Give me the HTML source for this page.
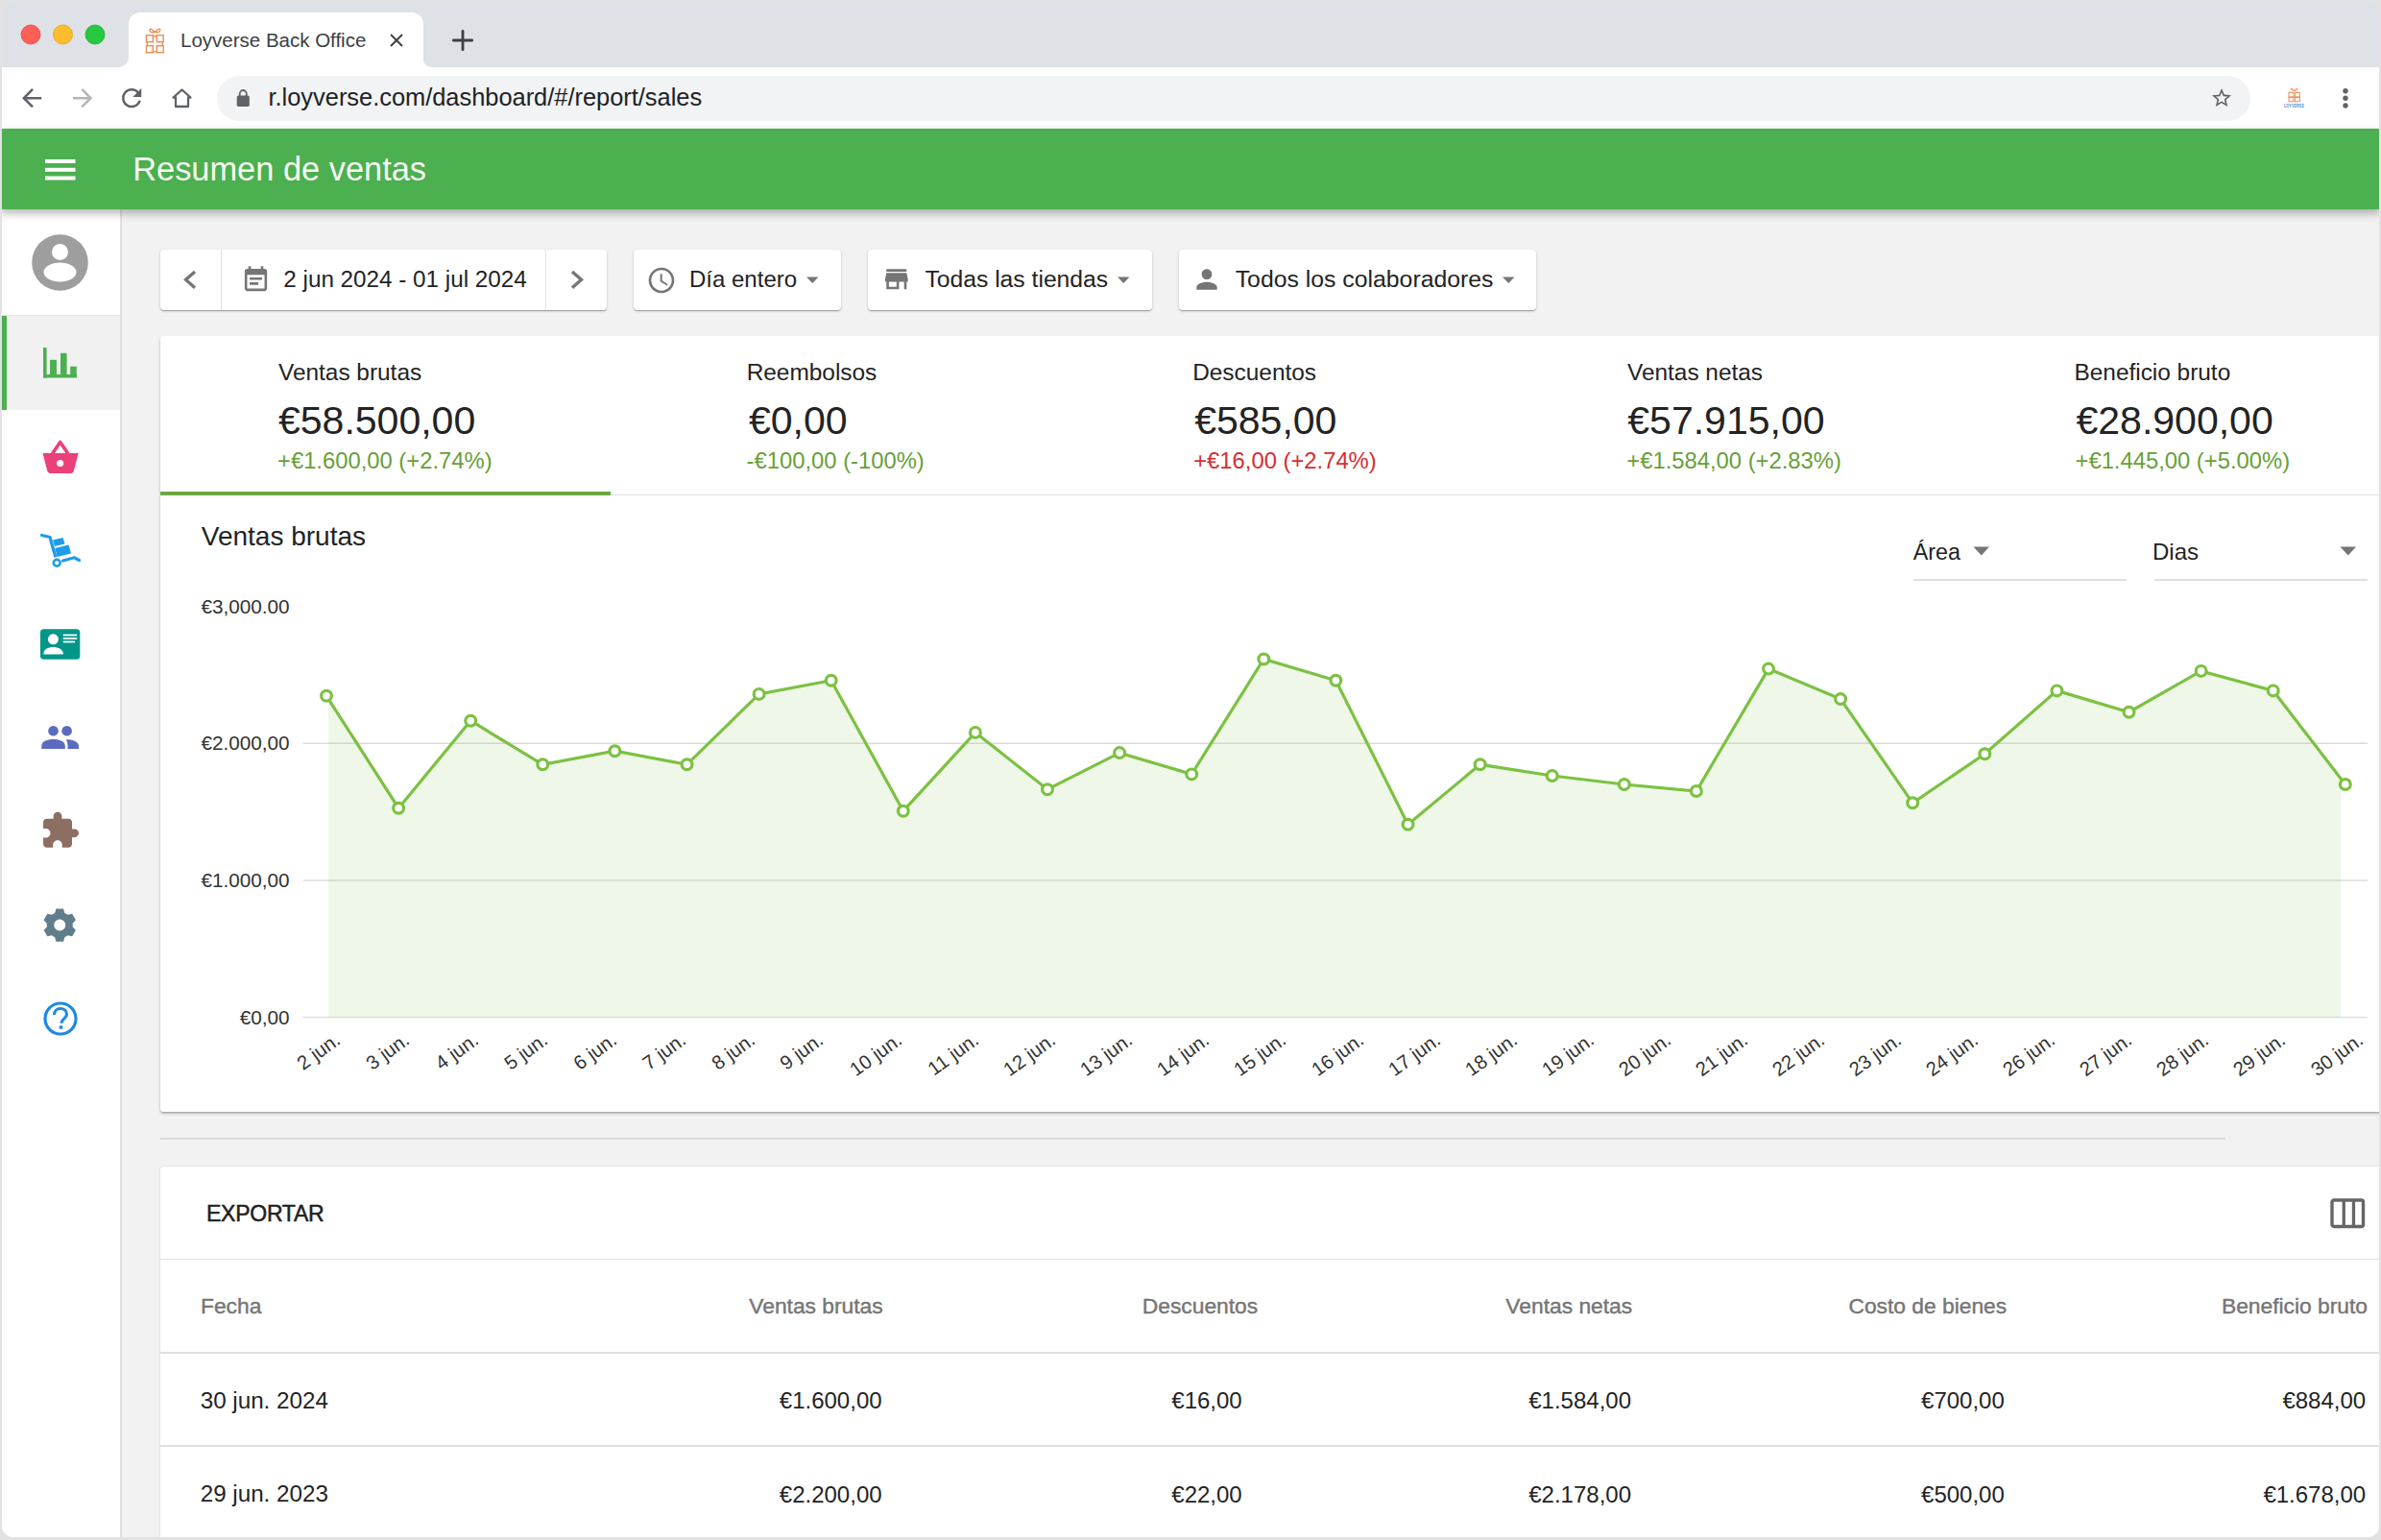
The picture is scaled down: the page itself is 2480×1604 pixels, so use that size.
<!DOCTYPE html>
<html><head><meta charset="utf-8">
<style>
html,body{margin:0;padding:0}
body{width:2480px;height:1604px;overflow:hidden;position:relative;background:#e2e2e2;font-family:"Liberation Sans",sans-serif}
.a{position:absolute}
.t{position:absolute;white-space:pre;line-height:1;font-family:"Liberation Sans",sans-serif;color:#232323}
#win{position:absolute;left:2px;top:1px;width:2476px;height:1600px;border-radius:12px;overflow:hidden;background:#f2f2f2}
svg{position:absolute;overflow:visible}
.kg{color:#689f38}.kr{color:#d32f2f}
.yl{font-size:20.7px;width:120px;text-align:right;color:#333}
.xl{font-size:20.3px;width:120px;text-align:right;color:#333;transform-origin:100% 85%;transform:rotate(-36deg)}
</style></head>
<body>
<div id="win">
<!-- everything inside uses page coords offset by (-2,-1) -->
<div class="a" style="left:-2px;top:-1px;width:2480px;height:1604px">

<!-- TAB STRIP -->
<div class="a" style="left:0;top:0;width:2480px;height:70px;background:#dee1e6"></div>
<!-- traffic lights -->
<svg style="left:0;top:0" width="130" height="70">
  <circle cx="32" cy="36" r="10" fill="#ff5f57" stroke="#e2463f" stroke-width="0.8"/>
  <circle cx="65.5" cy="36" r="10" fill="#febc2e" stroke="#e1a116" stroke-width="0.8"/>
  <circle cx="99" cy="36" r="10" fill="#28c840" stroke="#1aab29" stroke-width="0.8"/>
</svg>
<!-- active tab -->
<div class="a" style="left:134px;top:13px;width:306.5px;height:58px;background:#fff;border-radius:12px 12px 0 0"></div>
<svg style="left:120px;top:56px" width="340" height="15">
  <path d="M2 14 Q14 14 14 2 L14 14 Z" fill="#fff"/>
  <path d="M320.5 3 Q320.5 14 331 14 L320.5 14 Z" fill="#fff"/>
</svg>
<!-- favicon -->
<svg style="left:150px;top:27px" width="22" height="30" viewBox="0 0 22 30">
  <g fill="none" stroke="#ee8a4f" stroke-width="1.35">
    <rect x="2.4" y="9.7" width="6.9" height="7"/><rect x="13.3" y="9.7" width="6.9" height="7"/>
    <rect x="2.4" y="20.7" width="6.9" height="7"/><rect x="13.3" y="20.7" width="6.9" height="7"/>
    <path d="M9.3 10.6H13.3M9.3 26.8H13.3M3.4 16.7V20.7M19.2 16.7V20.7"/>
    <path d="M11.3 6.4C9.5 4.5 8 2.7 6.6 3.1C5.2 3.6 5.6 5.9 7.3 6.3C8.7 6.6 10 6.5 11.3 6.4C12.6 6.5 13.9 6.6 15.3 6.3C17 5.9 17.4 3.6 16 3.1C14.6 2.7 13.1 4.5 11.3 6.4z"/>
  </g>
</svg>
<div class="t" style="left:188px;top:32px;font-size:20.5px;color:#3c4043">Loyverse Back Office</div>
<svg style="left:406px;top:35px" width="14" height="14" viewBox="0 0 14 14"><path d="M1 1L13 13M13 1L1 13" stroke="#3c4043" stroke-width="1.9"/></svg>
<svg style="left:469.5px;top:30px" width="25" height="24" viewBox="0 0 25 24"><path d="M12 2.3V21.7M2.3 12H21.7" stroke="#3c4043" stroke-width="2.8" stroke-linecap="round"/></svg>

<!-- TOOLBAR -->
<div class="a" style="left:0;top:70px;width:2480px;height:64px;background:#fff"></div>
<svg style="left:18.4px;top:87.3px" width="30.3" height="30.3" viewBox="0 0 24 24"><path d="M20 11H7.83l5.59-5.59L12 4l-8 8 8 8 1.41-1.41L7.83 13H20v-2z" fill="#5f6368"/></svg>
<svg style="left:70.6px;top:87.3px" width="30.3" height="30.3" viewBox="0 0 24 24"><path d="M12 4l-1.41 1.41L16.17 11H4v2h12.17l-5.58 5.59L12 20l8-8z" fill="#b4b6b8"/></svg>
<svg style="left:122.4px;top:87px" width="30.3" height="30.3" viewBox="0 0 24 24"><path d="M17.65 6.35C16.2 4.9 14.21 4 12 4c-4.42 0-7.99 3.58-7.99 8s3.57 8 7.99 8c3.73 0 6.84-2.55 7.73-6h-2.08c-.82 2.33-3.04 4-5.65 4-3.31 0-6-2.69-6-6s2.69-6 6-6c1.66 0 3.14.69 4.22 1.78L13 11h7V4l-2.35 2.35z" fill="#5f6368"/></svg>
<svg style="left:178px;top:91px" width="23" height="22" viewBox="0 0 23 22"><path d="M11.5 2.5L2.5 10.5H5v9.5h13V10.5h2.5z" fill="none" stroke="#5f6368" stroke-width="2.3" stroke-linejoin="round"/></svg>
<!-- omnibox -->
<div class="a" style="left:225.5px;top:79px;width:2118px;height:47px;background:#f1f3f4;border-radius:24px"></div>
<svg style="left:246px;top:92px" width="15" height="20" viewBox="0 0 15 20"><path d="M3.75 8V5.5A3.5 3.5 0 0 1 10.75 5.5V8" fill="none" stroke="#5f6368" stroke-width="1.8"/><rect x="0.7" y="7.5" width="13.1" height="11.4" rx="1.6" fill="#5f6368"/></svg>
<div class="t" style="left:279.5px;top:89.3px;font-size:25.4px;color:#202124">r.loyverse.com/dashboard/#/report/sales</div>
<svg style="left:2302px;top:90px" width="24" height="24" viewBox="0 0 24 24"><path d="M22 9.24l-7.19-.62L12 2 9.19 8.63 2 9.24l5.46 4.73L5.82 21 12 17.27 18.18 21l-1.63-7.03L22 9.24zM12 15.4l-3.76 2.27 1-4.28-3.32-2.88 4.38-.38L12 6.1l1.71 4.04 4.38.38-3.32 2.88 1 4.28L12 15.4z" fill="#5f6368"/></svg>
<!-- extension icon -->
<svg style="left:2378px;top:90px" width="23" height="25" viewBox="0 0 23 25">
  <g fill="none" stroke="#ee8a4f" stroke-width="1">
    <rect x="6" y="6.3" width="5" height="4.6"/><rect x="12.3" y="6.3" width="5" height="4.6"/>
    <rect x="6" y="11.5" width="5" height="4.3"/><rect x="12.3" y="11.5" width="5" height="4.3"/>
    <path d="M11.6 4.5C10.5 3 9 1.5 8.3 2.3C7.6 3.2 9.5 4.3 11.6 4.5C13.7 4.3 15.6 3.2 14.9 2.3C14.2 1.5 12.7 3 11.6 4.5z"/>
  </g>
  <text x="11.5" y="22.3" font-family="Liberation Sans" font-size="5.6" font-weight="bold" fill="#3f95d6" text-anchor="middle" textLength="21" lengthAdjust="spacingAndGlyphs">LOYVERSE</text>
</svg>
<svg style="left:2438px;top:91px" width="10" height="23"><circle cx="5" cy="3.7" r="2.7" fill="#5f6368"/><circle cx="5" cy="11.3" r="2.7" fill="#5f6368"/><circle cx="5" cy="19" r="2.7" fill="#5f6368"/></svg>

<!-- GREEN APP BAR -->
<div class="a" style="left:0;top:133.6px;width:2480px;height:84.4px;background:#4caf50;box-shadow:0 4px 9px rgba(0,0,0,0.3);z-index:5"></div>
<svg style="left:47px;top:165.5px;z-index:6" width="31.5" height="22" viewBox="0 0 31.5 22"><rect x="0" y="0" width="31.5" height="4" fill="#fff"/><rect x="0" y="8.8" width="31.5" height="4" fill="#fff"/><rect x="0" y="17.5" width="31.5" height="4" fill="#fff"/></svg>
<div class="t" style="left:138.2px;top:158.8px;font-size:34.4px;color:#f4faf2;z-index:6">Resumen de ventas</div>

<!-- SIDEBAR -->
<div class="a" style="left:0;top:218px;width:125px;height:1386px;background:#fff;border-right:2px solid #e0e0e0"></div>
<div class="a" style="left:0;top:327.5px;width:125px;height:1px;background:#e6e6e6"></div>
<div class="a" style="left:0;top:328.5px;width:125px;height:98px;background:#f1f1f1"></div>
<div class="a" style="left:2px;top:328.5px;width:5px;height:98px;background:#4caf50"></div>
<!-- avatar -->
<svg style="left:33px;top:244px" width="59" height="59" viewBox="0 0 59 59">
  <defs><clipPath id="avc"><circle cx="29.5" cy="29.5" r="29.3"/></clipPath></defs>
  <circle cx="29.5" cy="29.5" r="29.3" fill="#9e9e9e"/>
  <g clip-path="url(#avc)" fill="#fff">
    <circle cx="29.5" cy="18.5" r="8.5"/>
    <ellipse cx="29.5" cy="39.5" rx="17" ry="10"/>
  </g>
</svg>
<!-- bar chart icon -->
<svg style="left:45px;top:362px" width="35" height="32" viewBox="0 0 35 32" fill="#4caf50">
  <rect x="0" y="0" width="3.6" height="31.5"/><rect x="0" y="28" width="35" height="3.5"/>
  <rect x="7" y="12.8" width="7" height="18"/><rect x="18" y="5.8" width="6.6" height="25"/><rect x="28.2" y="19.7" width="6.6" height="11"/>
</svg>
<!-- basket icon -->
<svg style="left:43px;top:459px" width="40" height="35" viewBox="0 0 40 35">
  <path d="M11.5 13.5L19.7 1.5L27.9 13.5" fill="none" stroke="#ec407a" stroke-width="3.6" stroke-linejoin="round"/>
  <path d="M1.5 13h37.2l-4.8 18.5c-.4 1.5-1.6 2.5-3.2 2.5H9.5c-1.6 0-2.8-1-3.2-2.5z" fill="#ec407a"/>
  <circle cx="19.7" cy="23.5" r="3.6" fill="#fff"/>
</svg>
<!-- dolly icon -->
<svg style="left:42px;top:554px" width="42" height="38" viewBox="0 0 42 38" fill="#1e9be9">
  <path d="M1.5 3.5L10 5.5L15.5 25" fill="none" stroke="#1e9be9" stroke-width="3.2" stroke-linecap="round" stroke-linejoin="round"/>
  <circle cx="17.2" cy="32.3" r="3.4" fill="none" stroke="#1e9be9" stroke-width="2.6"/>
  <path d="M23.5 30L35.5 26.8L40.5 29.5" fill="none" stroke="#1e9be9" stroke-width="3.2" stroke-linecap="round" stroke-linejoin="round"/>
  <path d="M13 8.5L23.5 6L25.5 12.5L15 15z"/>
  <path d="M15.2 17L29.5 13.5L32 22.5L17.5 26z"/>
</svg>
<!-- id card icon -->
<svg style="left:42px;top:654.5px" width="42" height="32" viewBox="0 0 42 32">
  <rect x="0" y="0.3" width="41.3" height="31.5" rx="3.5" fill="#009688"/>
  <circle cx="13.4" cy="10.8" r="5.5" fill="#fff"/>
  <path d="M3.3 26.5C3.3 21 8 19 13.4 19S23.9 21 23.9 26.5z" fill="#fff"/>
  <rect x="23.8" y="5.6" width="14.4" height="1.8" fill="#fff"/><rect x="23.8" y="9.1" width="14.4" height="1.8" fill="#fff"/><rect x="23.8" y="12.6" width="12.2" height="1.8" fill="#fff"/>
</svg>
<!-- people icon -->
<svg style="left:43px;top:755px" width="40" height="26" viewBox="0 0 40 26" fill="#5c6bc0">
  <circle cx="12.5" cy="6.3" r="5.3"/><circle cx="26.6" cy="6.3" r="5.3"/>
  <path d="M0.3 25V22C0.3 17 6 15 12.5 15S24.8 17 24.8 22V25z"/>
  <path d="M25.8 15.2C32 15.2 39 17 39 22V25H27.5V22C27.5 19 27 17 25.8 15.2z"/>
</svg>
<!-- puzzle icon -->
<svg style="left:40.5px;top:844.4px" width="42.3" height="42.3" viewBox="0 0 24 24"><path d="M20.5 11H19V7c0-1.1-.9-2-2-2h-4V3.5C13 2.12 11.88 1 10.5 1S8 2.12 8 3.5V5H4c-1.1 0-1.99.9-1.99 2v3.8H3.5c1.49 0 2.7 1.21 2.7 2.7s-1.21 2.7-2.7 2.7H2V20c0 1.1.9 2 2 2h3.8v-1.5c0-1.49 1.21-2.7 2.7-2.7 1.49 0 2.7 1.21 2.7 2.7V22H17c1.1 0 2-.9 2-2v-4h1.5c1.38 0 2.5-1.12 2.5-2.5S21.88 11 20.5 11z" fill="#8d6e63" transform="translate(0.3 0) scale(1.0)"/></svg>
<!-- gear icon -->
<svg style="left:44.8px;top:945.6px" width="35" height="36" viewBox="0 0 35 36">
  <path fill="#607d8b" fill-rule="evenodd" d="M22.34 4.94 L21.04 0.46 L13.46 0.46 L12.16 4.94 L8.88 6.83 L4.35 5.73 L0.56 12.29 L3.78 15.66 L3.78 19.44 L0.56 22.81 L4.35 29.37 L8.88 28.27 L12.16 30.16 L13.46 34.64 L21.04 34.64 L22.34 30.16 L25.62 28.27 L30.15 29.37 L33.94 22.81 L30.72 19.44 L30.72 15.66 L33.94 12.29 L30.15 5.73 L25.62 6.83 Z M23.25 17.55 A6 6 0 1 0 11.25 17.55 A6 6 0 1 0 23.25 17.55 Z"/>
</svg>
<!-- help icon -->
<svg style="left:44.5px;top:1042.5px" width="36" height="36" viewBox="0 0 36 36">
  <circle cx="18" cy="18" r="16" fill="none" stroke="#1e88e5" stroke-width="3.2"/>
  <path d="M11.5 14c0-3.8 2.8-6.5 6.5-6.5s6.5 2.6 6.5 6c0 4.5-5.5 4.8-5.5 9.3" fill="none" stroke="#1e88e5" stroke-width="3.2"/>
  <rect x="16.7" y="25.3" width="3.6" height="3.4" fill="#1e88e5"/>
</svg>

<!-- FILTER BAR -->
<div class="a" style="left:166.5px;top:259.5px;width:465.5px;height:63px;background:#fff;border-radius:4px;box-shadow:0 1px 3px rgba(0,0,0,0.2),0 1px 1px rgba(0,0,0,0.14),0 2px 1px -1px rgba(0,0,0,0.12)"></div>
<div class="a" style="left:230px;top:259.5px;width:1px;height:63px;background:#e3e3e3"></div>
<div class="a" style="left:568px;top:259.5px;width:1px;height:63px;background:#e3e3e3"></div>
<svg style="left:185px;top:278px" width="24" height="26" viewBox="0 0 24 26"><path d="M18 5L8.5 13.3L18 21.7" fill="none" stroke="#757575" stroke-width="3.3"/></svg>
<svg style="left:250.7px;top:275.5px" width="31" height="31" viewBox="0 0 24 24"><path d="M17 10H7v2h10v-2zm2-7h-1V1h-2v2H8V1H6v2H5c-1.11 0-1.99.9-1.99 2L3 19c0 1.1.89 2 2 2h14c1.1 0 2-.9 2-2V5c0-1.1-.9-2-2-2zm0 16H5V8h14v11zm-5-5H7v2h7v-2z" fill="#757575"/></svg>
<div class="t" style="left:295.3px;top:279.4px;font-size:24.25px">2 jun 2024 - 01 jul 2024</div>
<svg style="left:590px;top:278px" width="24" height="26" viewBox="0 0 24 26"><path d="M6 5L15.5 13.3L6 21.7" fill="none" stroke="#757575" stroke-width="3.3"/></svg>

<div class="a" style="left:660px;top:259.5px;width:216px;height:63px;background:#fff;border-radius:4px;box-shadow:0 1px 3px rgba(0,0,0,0.2),0 1px 1px rgba(0,0,0,0.14),0 2px 1px -1px rgba(0,0,0,0.12)"></div>
<svg style="left:673px;top:275.5px" width="32" height="32" viewBox="0 0 24 24"><path d="M11.99 2C6.47 2 2 6.48 2 12s4.47 10 9.99 10C17.52 22 22 17.52 22 12S17.52 2 11.99 2zM12 20c-4.42 0-8-3.58-8-8s3.58-8 8-8 8 3.58 8 8-3.58 8-8 8zm.5-13H11v6l5.25 3.15.75-1.23-4.5-2.67z" fill="#757575"/></svg>
<div class="t" style="left:718px;top:279.1px;font-size:24px">Día entero</div>
<svg style="left:840px;top:288px" width="13" height="8" viewBox="0 0 13 8"><path d="M0 0.5h12.5L6.25 7z" fill="#757575"/></svg>

<div class="a" style="left:904px;top:259.5px;width:296px;height:63px;background:#fff;border-radius:4px;box-shadow:0 1px 3px rgba(0,0,0,0.2),0 1px 1px rgba(0,0,0,0.14),0 2px 1px -1px rgba(0,0,0,0.12)"></div>
<svg style="left:917.9px;top:274.9px" width="31.6" height="31.6" viewBox="0 0 24 24"><path d="M20 4H4v2h16V4zm1 10v-2l-1-5H4l-1 5v2h1v6h10v-6h4v6h2v-6h1zm-9 4H6v-4h6v4z" fill="#757575"/></svg>
<div class="t" style="left:963.4px;top:279px;font-size:24.7px">Todas las tiendas</div>
<svg style="left:1164px;top:288px" width="13" height="8" viewBox="0 0 13 8"><path d="M0 0.5h12.5L6.25 7z" fill="#757575"/></svg>

<div class="a" style="left:1228px;top:259.5px;width:372px;height:63px;background:#fff;border-radius:4px;box-shadow:0 1px 3px rgba(0,0,0,0.2),0 1px 1px rgba(0,0,0,0.14),0 2px 1px -1px rgba(0,0,0,0.12)"></div>
<svg style="left:1241px;top:275px" width="32" height="32" viewBox="0 0 24 24"><path d="M12 12c2.21 0 4-1.79 4-4s-1.79-4-4-4-4 1.79-4 4 1.79 4 4 4zm0 2c-2.67 0-8 1.34-8 4v2h16v-2c0-2.66-5.33-4-8-4z" fill="#757575"/></svg>
<div class="t" style="left:1286.7px;top:278.9px;font-size:24.8px">Todos los colaboradores</div>
<svg style="left:1564.8px;top:288px" width="13" height="8" viewBox="0 0 13 8"><path d="M0 0.5h12.5L6.25 7z" fill="#757575"/></svg>

<!-- KPI + CHART CARD -->
<div class="a" style="left:166.8px;top:349.5px;width:2400px;height:808px;background:#fff;border-radius:3px;box-shadow:0 2px 3px rgba(0,0,0,0.22),0 1px 1.5px rgba(0,0,0,0.14)"></div>
<div class="a" style="left:166.8px;top:514.5px;width:2400px;height:1px;background:#e3e3e3"></div>
<div class="a" style="left:166.8px;top:512px;width:469px;height:3.5px;background:#6aa843"></div>

<div class="t" style="left:290px;top:376.3px;font-size:24.4px">Ventas brutas</div>
<div class="t" style="left:290px;top:418.2px;font-size:41px">€58.500,00</div>
<div class="t kg" style="left:289px;top:467.8px;font-size:23.8px">+€1.600,00 (+2.74%)</div>

<div class="t" style="left:777.7px;top:376.3px;font-size:24.4px">Reembolsos</div>
<div class="t" style="left:780px;top:418.2px;font-size:41px">€0,00</div>
<div class="t kg" style="left:777.6px;top:467.8px;font-size:23.8px">-€100,00 (-100%)</div>

<div class="t" style="left:1242.2px;top:376.3px;font-size:24.4px">Descuentos</div>
<div class="t" style="left:1244.2px;top:418.2px;font-size:41px">€585,00</div>
<div class="t kr" style="left:1243.2px;top:467.8px;font-size:23.8px">+€16,00 (+2.74%)</div>

<div class="t" style="left:1695px;top:376.3px;font-size:24.4px">Ventas netas</div>
<div class="t" style="left:1695.3px;top:418.2px;font-size:41px">€57.915,00</div>
<div class="t kg" style="left:1694.3px;top:467.8px;font-size:23.8px">+€1.584,00 (+2.83%)</div>

<div class="t" style="left:2160.5px;top:376.3px;font-size:24.4px">Beneficio bruto</div>
<div class="t" style="left:2162.5px;top:418.2px;font-size:41px">€28.900,00</div>
<div class="t kg" style="left:2161.5px;top:467.8px;font-size:23.8px">+€1.445,00 (+5.00%)</div>

<!-- chart title & selectors -->
<div class="t" style="left:209.8px;top:545.2px;font-size:28px">Ventas brutas</div>
<div class="t" style="left:1992.8px;top:563.8px;font-size:23.3px">Área</div>
<svg style="left:2054px;top:566px" width="20" height="14" viewBox="0 0 20 14"><path d="M1.5 3.5h16.5l-8.25 9z" fill="#757575"/></svg>
<div class="a" style="left:1992.8px;top:602.5px;width:222px;height:2px;background:#e0e0e0"></div>
<div class="t" style="left:2242px;top:563.3px;font-size:24px">Dias</div>
<svg style="left:2435.5px;top:566px" width="20" height="14" viewBox="0 0 20 14"><path d="M1.5 3.5h16.5l-8.25 9z" fill="#757575"/></svg>
<div class="a" style="left:2243.9px;top:602.5px;width:222px;height:2px;background:#e0e0e0"></div>

<!-- y labels -->
<div class="t yl" style="left:181.6px;top:621.6px">€3,000.00</div>
<div class="t yl" style="left:181.6px;top:764.2px">€2.000,00</div>
<div class="t yl" style="left:181.6px;top:907.0px">€1.000,00</div>
<div class="t yl" style="left:181.6px;top:1050.1px">€0,00</div>

<svg style="left:0;top:0" width="2480" height="1200" viewBox="0 0 2480 1200">
  <defs><clipPath id="cc"><rect x="342" y="600" width="2096" height="460"/></clipPath></defs>
  <g stroke="#dcdcdc" stroke-width="1.6">
    <line x1="315.5" y1="774.2" x2="2466" y2="774.2"/>
    <line x1="315.5" y1="917" x2="2466" y2="917"/>
    <line x1="315.5" y1="1059.6" x2="2466" y2="1059.6" stroke="#e3e3e3"/>
  </g>
  <path d="M340.0,1059.6 L340.0,724.8 L415.1,841.7 L490.2,750.7 L565.3,796.3 L640.4,782.2 L715.5,796.3 L790.6,722.9 L865.7,708.8 L940.8,844.7 L1015.9,762.9 L1091.0,822.2 L1166.1,784.1 L1241.2,806.4 L1316.3,686.5 L1391.4,708.8 L1466.5,858.8 L1541.6,796.3 L1616.7,808.0 L1691.8,817.0 L1766.9,824.0 L1842.0,696.6 L1917.1,728.1 L1992.2,836.3 L2067.3,785.2 L2142.4,719.4 L2217.5,741.7 L2292.6,698.9 L2367.7,719.4 L2442.8,817.0 L2442.8,1059.6 Z" fill="rgba(124,193,66,0.12)" clip-path="url(#cc)"/>
  <polyline points="340.0,724.8 415.1,841.7 490.2,750.7 565.3,796.3 640.4,782.2 715.5,796.3 790.6,722.9 865.7,708.8 940.8,844.7 1015.9,762.9 1091.0,822.2 1166.1,784.1 1241.2,806.4 1316.3,686.5 1391.4,708.8 1466.5,858.8 1541.6,796.3 1616.7,808.0 1691.8,817.0 1766.9,824.0 1842.0,696.6 1917.1,728.1 1992.2,836.3 2067.3,785.2 2142.4,719.4 2217.5,741.7 2292.6,698.9 2367.7,719.4 2442.8,817.0" fill="none" stroke="#7cc142" stroke-width="3.2" stroke-linejoin="miter"/>
  <g fill="#fff" stroke="#7cc142" stroke-width="3.2"><circle cx="340.0" cy="724.8" r="5.4"/><circle cx="415.1" cy="841.7" r="5.4"/><circle cx="490.2" cy="750.7" r="5.4"/><circle cx="565.3" cy="796.3" r="5.4"/><circle cx="640.4" cy="782.2" r="5.4"/><circle cx="715.5" cy="796.3" r="5.4"/><circle cx="790.6" cy="722.9" r="5.4"/><circle cx="865.7" cy="708.8" r="5.4"/><circle cx="940.8" cy="844.7" r="5.4"/><circle cx="1015.9" cy="762.9" r="5.4"/><circle cx="1091.0" cy="822.2" r="5.4"/><circle cx="1166.1" cy="784.1" r="5.4"/><circle cx="1241.2" cy="806.4" r="5.4"/><circle cx="1316.3" cy="686.5" r="5.4"/><circle cx="1391.4" cy="708.8" r="5.4"/><circle cx="1466.5" cy="858.8" r="5.4"/><circle cx="1541.6" cy="796.3" r="5.4"/><circle cx="1616.7" cy="808.0" r="5.4"/><circle cx="1691.8" cy="817.0" r="5.4"/><circle cx="1766.9" cy="824.0" r="5.4"/><circle cx="1842.0" cy="696.6" r="5.4"/><circle cx="1917.1" cy="728.1" r="5.4"/><circle cx="1992.2" cy="836.3" r="5.4"/><circle cx="2067.3" cy="785.2" r="5.4"/><circle cx="2142.4" cy="719.4" r="5.4"/><circle cx="2217.5" cy="741.7" r="5.4"/><circle cx="2292.6" cy="698.9" r="5.4"/><circle cx="2367.7" cy="719.4" r="5.4"/><circle cx="2442.8" cy="817.0" r="5.4"/></g>
</svg>
<div class="t xl" style="left:236.4px;top:1069.0px">2 jun.</div>
<div class="t xl" style="left:308.3px;top:1069.0px">3 jun.</div>
<div class="t xl" style="left:380.1px;top:1069.0px">4 jun.</div>
<div class="t xl" style="left:452.0px;top:1069.0px">5 jun.</div>
<div class="t xl" style="left:523.8px;top:1069.0px">6 jun.</div>
<div class="t xl" style="left:595.7px;top:1069.0px">7 jun.</div>
<div class="t xl" style="left:667.6px;top:1069.0px">8 jun.</div>
<div class="t xl" style="left:739.4px;top:1069.0px">9 jun.</div>
<div class="t xl" style="left:821.0px;top:1069.0px">10 jun.</div>
<div class="t xl" style="left:901.1px;top:1069.0px">11 jun.</div>
<div class="t xl" style="left:981.2px;top:1069.0px">12 jun.</div>
<div class="t xl" style="left:1061.2px;top:1069.0px">13 jun.</div>
<div class="t xl" style="left:1141.3px;top:1069.0px">14 jun.</div>
<div class="t xl" style="left:1221.4px;top:1069.0px">15 jun.</div>
<div class="t xl" style="left:1301.5px;top:1069.0px">16 jun.</div>
<div class="t xl" style="left:1381.6px;top:1069.0px">17 jun.</div>
<div class="t xl" style="left:1461.6px;top:1069.0px">18 jun.</div>
<div class="t xl" style="left:1541.7px;top:1069.0px">19 jun.</div>
<div class="t xl" style="left:1621.8px;top:1069.0px">20 jun.</div>
<div class="t xl" style="left:1701.9px;top:1069.0px">21 jun.</div>
<div class="t xl" style="left:1782.0px;top:1069.0px">22 jun.</div>
<div class="t xl" style="left:1862.0px;top:1069.0px">23 jun.</div>
<div class="t xl" style="left:1942.1px;top:1069.0px">24 jun.</div>
<div class="t xl" style="left:2022.2px;top:1069.0px">26 jun.</div>
<div class="t xl" style="left:2102.3px;top:1069.0px">27 jun.</div>
<div class="t xl" style="left:2182.4px;top:1069.0px">28 jun.</div>
<div class="t xl" style="left:2262.4px;top:1069.0px">29 jun.</div>
<div class="t xl" style="left:2342.5px;top:1069.0px">30 jun.</div>


<!-- separator line -->
<div class="a" style="left:167px;top:1185px;width:2151px;height:2px;background:#dadada"></div>
<!-- TABLE CARD -->
<div class="a" style="left:166.8px;top:1214.5px;width:2400px;height:500px;background:#fff;border-radius:3px;box-shadow:0 0 2px rgba(0,0,0,0.2)"></div>
<div class="a" style="left:166.8px;top:1310.5px;width:2400px;height:1.5px;background:#e0e0e0"></div>
<div class="a" style="left:166.8px;top:1408px;width:2400px;height:1.5px;background:#e0e0e0"></div>
<div class="a" style="left:166.8px;top:1505.3px;width:2400px;height:1.5px;background:#e0e0e0"></div>
<svg style="left:2427px;top:1247.5px" width="37" height="32" viewBox="0 0 37 32"><rect x="2" y="2" width="32.5" height="27.5" rx="2" fill="none" stroke="#666" stroke-width="3.4"/><rect x="12.6" y="2" width="3.3" height="27.5" fill="#666"/><rect x="22.8" y="2" width="3.3" height="27.5" fill="#666"/></svg>
<div class="t" style="left:215px;top:1252.6px;font-size:23px;color:#212121;-webkit-text-stroke:0.5px #212121;letter-spacing:-0.25px">EXPORTAR</div>
<div class="t " style="left:209.0px;top:1348.8px;font-size:22.8px;color:#757575;-webkit-text-stroke:0.4px #757575">Fecha</div>
<div class="t " style="left:519.7px;width:400px;text-align:right;top:1348.8px;font-size:22.8px;color:#757575;-webkit-text-stroke:0.4px #757575">Ventas brutas</div>
<div class="t " style="left:910.2px;width:400px;text-align:right;top:1348.8px;font-size:22.8px;color:#757575;-webkit-text-stroke:0.4px #757575">Descuentos</div>
<div class="t " style="left:1300.2px;width:400px;text-align:right;top:1348.8px;font-size:22.8px;color:#757575;-webkit-text-stroke:0.4px #757575">Ventas netas</div>
<div class="t " style="left:1690.2px;width:400px;text-align:right;top:1348.8px;font-size:22.8px;color:#757575;-webkit-text-stroke:0.4px #757575">Costo de bienes</div>
<div class="t " style="left:2066.0px;width:400px;text-align:right;top:1348.8px;font-size:22.8px;color:#757575;-webkit-text-stroke:0.4px #757575">Beneficio bruto</div>
<div class="t " style="left:208.7px;top:1446.7px;font-size:24.2px;">30 jun. 2024</div>
<div class="t " style="left:518.6px;width:400px;text-align:right;top:1446.9px;font-size:24px;">€1.600,00</div>
<div class="t " style="left:893.7px;width:400px;text-align:right;top:1446.9px;font-size:24px;">€16,00</div>
<div class="t " style="left:1299.0px;width:400px;text-align:right;top:1446.9px;font-size:24px;">€1.584,00</div>
<div class="t " style="left:1687.8px;width:400px;text-align:right;top:1446.9px;font-size:24px;">€700,00</div>
<div class="t " style="left:2064.2px;width:400px;text-align:right;top:1446.9px;font-size:24px;">€884,00</div>
<div class="t " style="left:208.7px;top:1544.4px;font-size:24.2px;">29 jun. 2023</div>
<div class="t " style="left:518.6px;width:400px;text-align:right;top:1544.6px;font-size:24px;">€2.200,00</div>
<div class="t " style="left:893.7px;width:400px;text-align:right;top:1544.6px;font-size:24px;">€22,00</div>
<div class="t " style="left:1299.0px;width:400px;text-align:right;top:1544.6px;font-size:24px;">€2.178,00</div>
<div class="t " style="left:1687.8px;width:400px;text-align:right;top:1544.6px;font-size:24px;">€500,00</div>
<div class="t " style="left:2064.2px;width:400px;text-align:right;top:1544.6px;font-size:24px;">€1.678,00</div>

</div>
</div>
</body></html>
